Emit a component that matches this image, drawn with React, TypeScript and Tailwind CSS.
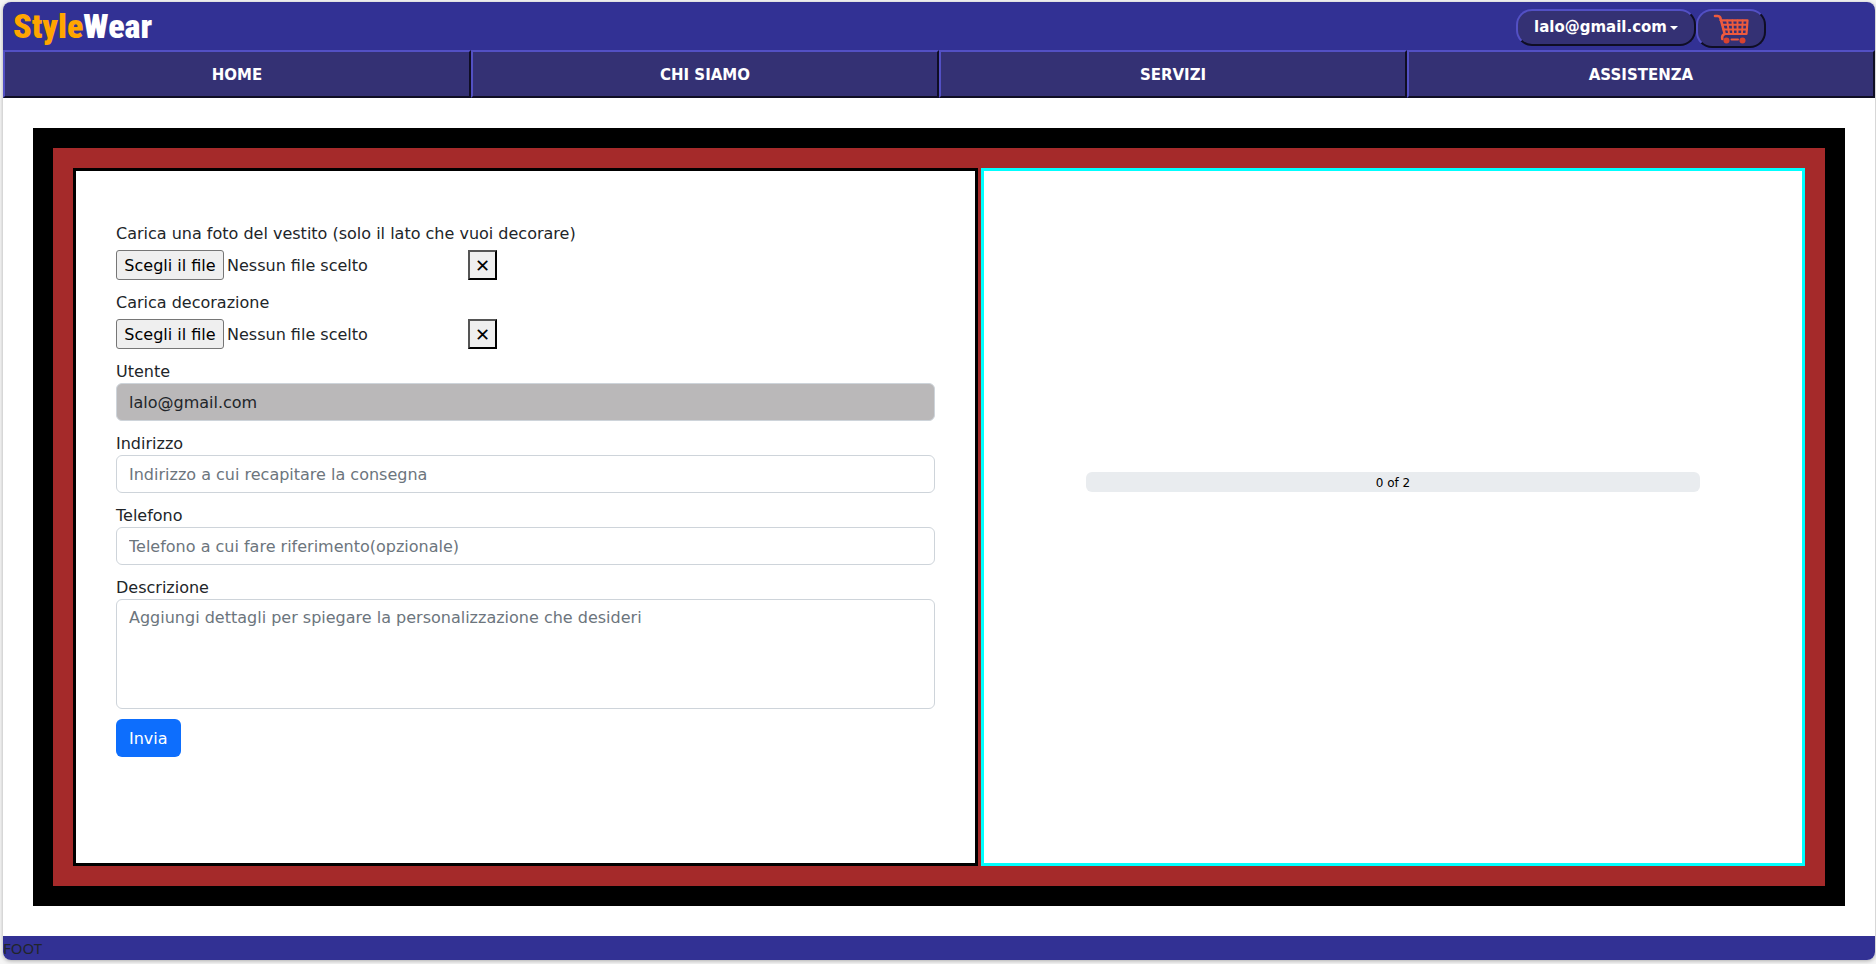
import { useState } from "react";

const navItems = ["HOME", "CHI SIAMO", "SERVIZI", "ASSISTENZA"];
const raised = "border-2 border-t-[#5350c4] border-l-[#5350c4] border-r-[#0f0e24] border-b-[#0f0e24] bg-[#343174]";
const field = "block h-[38px] w-full rounded-md border border-[#ced4da] px-3 placeholder:text-[#6c757d]";
const caption = "block pt-px leading-[23px]";

function CartIcon() {
  return (
    <svg viewBox="0 0 36 30" className="h-[30px] w-9" fill="none" stroke="#ee5a3e" strokeLinecap="round" strokeLinejoin="round" aria-hidden="true">
      <path d="M2 2h2.500q2.200 0 2.900 2l4.300 16q-3.200 1-2.400 5" strokeWidth="2.600" />
      <path d="M7.500 6.300H34.500L33.500 20H11.500" strokeWidth="2.200" />
      <path d="M9 10.800H34M10.500 15.500h23.300M14.200 6.500l1.800 13M19.400 6.500l.8 13M24.500 6.500v13M29.700 6.500l-.7 13" strokeWidth="1.900" />
      <path d="M18.500 25.500h6.500" strokeWidth="2" />
      <circle cx="13.500" cy="26.500" r="3" fill="#d8432f" stroke="none" />
      <circle cx="29.500" cy="26.500" r="3" fill="#d8432f" stroke="none" />
    </svg>
  );
}

function FileField({ id, label }: { id: string; label: string }) {
  const [name, setName] = useState("");
  return (
    <div className="mb-2.5">
      <p className={`mb-[5px] ${caption}`}>{label}</p>
      <div className="flex h-[30px] items-stretch">
        <div className="flex w-[352px] items-center gap-[3px]">
          <input id={id} type="file" aria-label={label} className="sr-only" onChange={(e) => setName(e.target.files?.[0]?.name ?? "")} />
          <label htmlFor={id} className="flex h-full w-[108px] items-center justify-center rounded-[3px] border border-[#767676] bg-[#efefef] pt-0.5 whitespace-nowrap text-black">Scegli il file</label>
          <span className="truncate pt-0.5">{name || "Nessun file scelto"}</span>
        </div>
        <button type="button" onClick={() => setName("")} aria-label="Rimuovi file" className="flex w-[29px] items-center justify-center border-2 border-t-[#555] border-l-[#555] border-r-black border-b-black bg-[#efefef] pt-0.5 text-lg text-black">✕</button>
      </div>
    </div>
  );
}

export default function App() {
  return (
    <div className="min-h-screen bg-[#f5f5f5] pt-0.5 pr-px pb-1 pl-[3px] font-['DejaVu_Sans','Noto_Sans',sans-serif] text-base text-[#212529]">
      <div className="flex min-h-[calc(100vh-6px)] flex-col overflow-hidden rounded-lg bg-white shadow-[0_1px_4px_rgba(0,0,0,0.3)]">
        <header>
          <div className="flex h-12 items-start justify-between bg-[#323194] pr-[109px] pl-2.5">
            <a href="#" className="pt-1 font-[Impact,'Roboto_Condensed',Roboto,sans-serif] text-[34px] leading-10 font-black text-white">
              <span className="text-[#ffa500]">Style</span>Wear
            </a>
            <div className="flex items-start pt-[7px] text-[15px] font-bold text-white">
              <button className={`flex h-[37px] w-[180px] items-center justify-center gap-[3px] rounded-2xl ${raised}`}>
                lalo@gmail.com
                <span className="border-x-4 border-t-4 border-x-transparent border-t-white" />
              </button>
              <button aria-label="Carrello" className={`flex h-[39px] w-[70px] items-center justify-center rounded-2xl ${raised}`}>
                <CartIcon />
              </button>
            </div>
          </div>
          <nav className="grid grid-cols-4">
            {navItems.map((item) => (
              <a key={item} href="#" className={`flex h-12 items-center justify-center pt-0.5 text-[15px] font-bold text-white ${raised}`}>{item}</a>
            ))}
          </nav>
        </header>
        <main className="m-[30px] grid flex-1 grid-cols-[905fr_824fr] gap-[3px] border-20 border-black bg-[#a52a2a] p-5">
          <form className="min-w-0 border-3 border-black bg-white px-10 pt-[50px] pb-10" onSubmit={(e) => e.preventDefault()}>
            <FileField id="foto" label="Carica una foto del vestito (solo il lato che vuoi decorare)" />
            <FileField id="decorazione" label="Carica decorazione" />
            <div className="mb-2.5">
              <label htmlFor="utente" className={caption}>Utente</label>
              <input id="utente" readOnly value="lalo@gmail.com" className={`${field} bg-[#bab8b9]`} />
            </div>
            <div className="mb-2.5">
              <label htmlFor="indirizzo" className={caption}>Indirizzo</label>
              <input id="indirizzo" placeholder="Indirizzo a cui recapitare la consegna" className={`${field} bg-white`} />
            </div>
            <div className="mb-2.5">
              <label htmlFor="telefono" className={caption}>Telefono</label>
              <input id="telefono" type="tel" placeholder="Telefono a cui fare riferimento(opzionale)" className={`${field} bg-white`} />
            </div>
            <div className="mb-2.5">
              <label htmlFor="descrizione" className={caption}>Descrizione</label>
              <textarea id="descrizione" rows={4} placeholder="Aggiungi dettagli per spiegare la personalizzazione che desideri" className="block w-full resize-none rounded-md border border-[#ced4da] bg-white px-3 py-1.5 placeholder:text-[#6c757d]" />
            </div>
            <button type="submit" className="h-[38px] rounded-md bg-[#0d6efd] px-[13px] pt-0.5 text-white">Invia</button>
          </form>
          <section className="min-w-0 border-3 border-[#00ffff] bg-white pt-[301px]">
            <div role="progressbar" aria-valuenow={0} aria-valuemin={0} aria-valuemax={2} aria-label="Immagini caricate" className="mx-auto flex h-5 w-3/4 items-center justify-center rounded-md bg-[#e9ecef] pt-0.5 text-xs text-black">0 of 2</div>
          </section>
        </main>
        <footer className="h-6 bg-[#323194] font-['Noto_Sans',sans-serif] text-[15px] leading-6">FOOT</footer>
      </div>
    </div>
  );
}
